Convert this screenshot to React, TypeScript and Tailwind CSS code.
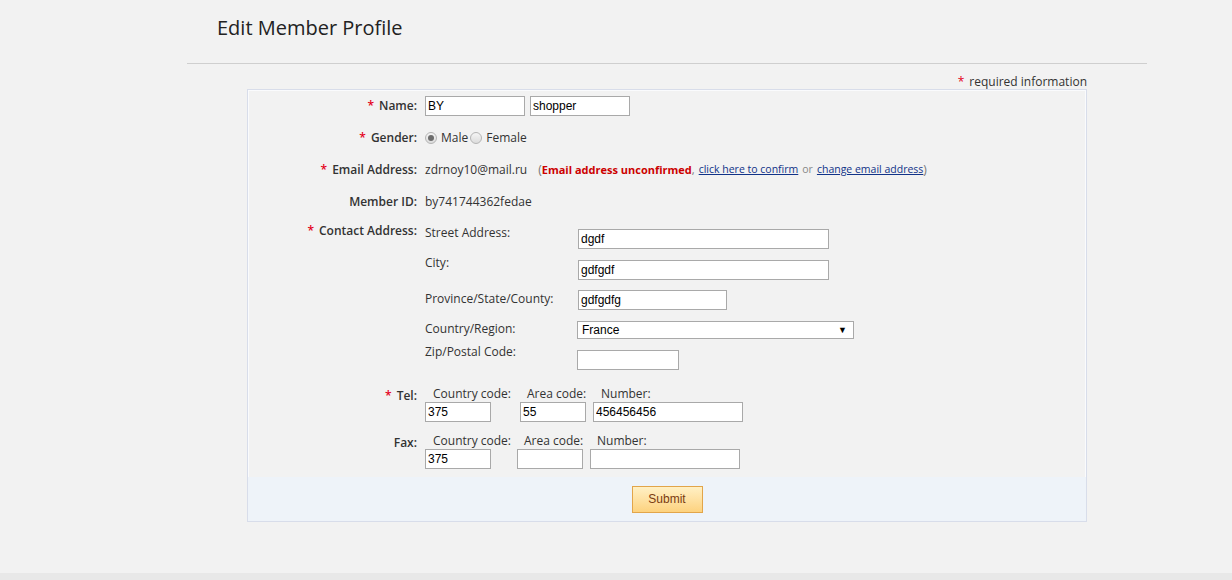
import React from 'react';

const font = { fontFamily: '"Open Sans", "Liberation Sans", sans-serif' };

function Field({ value = '', w }: { value?: string; w: string }) {
  return (
    <input
      defaultValue={value}
      className={`h-[20px] ${w} border border-[#a9a9a9] bg-white px-[2px] text-[12px] text-black outline-none font-['Liberation_Sans',Arial,sans-serif]`}
    />
  );
}

function Req() {
  return <span className="mr-[5px] text-[#e4001b]">*</span>;
}

function Label({ children, req }: { children: React.ReactNode; req?: boolean }) {
  return (
    <div className="w-[177px] shrink-0 pr-[8px] text-right font-semibold text-[#333]">
      {req && <Req />}
      {children}
    </div>
  );
}

function Radio({ checked }: { checked?: boolean }) {
  return (
    <span className="flex h-[12px] w-[12px] items-center justify-center rounded-full border border-[#b5b5b5] bg-gradient-to-b from-[#f5f5f5] to-[#dcdcdc]">
      {checked && <span className="h-[6px] w-[6px] rounded-full bg-[#6d6d6d]" />}
    </span>
  );
}

export default function App() {
  return (
    <div className="flex min-h-[580px] flex-col bg-[#f2f2f2] text-[12px] text-[#333]" style={font}>
      <div className="ml-[187px] h-[56px] w-[960px] pl-[30px] pt-[14px]">
        <h1 className="text-[20px] leading-[28px] text-[#222]">Edit Member Profile</h1>
      </div>
      <div className="ml-[187px] w-[960px]">
        <div className="mt-[7px] border-t border-[#cfcfcf]" />
        <div className="mt-[11px] pr-[60px] text-right leading-[14px]">
          <Req />
          required information
        </div>
        <div className="ml-[60px] w-[840px] border border-[#d8ddea] bg-[#f2f2f2] shadow-[inset_0_0_0_1px_#fafbfd]">
          <div className="flex h-[32px] items-center">
            <Label req>Name:</Label>
            <Field value="BY" w="w-[100px]" />
            <span className="w-[5px]" />
            <Field value="shopper" w="w-[100px]" />
          </div>
          <div className="flex h-[32px] items-center">
            <Label req>Gender:</Label>
            <Radio checked />
            <span className="ml-[4px] mr-[2px]">Male</span>
            <Radio />
            <span className="ml-[4px]">Female</span>
          </div>
          <div className="flex h-[32px] items-center">
            <Label req>Email Address:</Label>
            <span>zdrnoy10@mail.ru</span>
            <span className="ml-[11px] text-[#777]">(</span>
            <span className="text-[11px] font-bold text-[#cc0000]">Email address unconfirmed</span>
            <span className="mr-[4px] text-[11px] text-[#777]">,</span>
            <a href="#" className="text-[10.5px] text-[#113388] underline">click here to confirm</a>
            <span className="mx-[4px] text-[10.5px] text-[#888]">or</span>
            <a href="#" className="text-[10.5px] text-[#113388] underline">change email address</a>
            <span className="text-[#777]">)</span>
          </div>
          <div className="flex h-[31px] items-center">
            <Label>Member ID:</Label>
            <span>by741744362fedae</span>
          </div>
          <div className="flex pt-[6px]">
            <div className="leading-[16px]">
              <Label req>Contact Address:</Label>
            </div>
            <div className="leading-[16px]">
              <div className="flex h-[32px] items-start">
                <div className="mt-[2px] w-[153px]">Street Address:</div>
                <div className="mt-[6px]"><Field value="dgdf" w="w-[251px]" /></div>
              </div>
              <div className="flex h-[30px] items-start">
                <div className="w-[153px]">City:</div>
                <div className="mt-[5px]"><Field value="gdfgdf" w="w-[251px]" /></div>
              </div>
              <div className="flex h-[30px] items-start">
                <div className="mt-[6px] w-[153px]">Province/State/County:</div>
                <div className="mt-[5px]"><Field value="gdfgdfg" w="w-[149px]" /></div>
              </div>
              <div className="flex h-[26px] items-start">
                <div className="mt-[6px] w-[152px]">Country/Region:</div>
                <div className="mt-[6px] flex h-[18px] w-[277px] items-center justify-between border border-[#a9a9a9] bg-white pl-[4px] pr-[6px] font-['Liberation_Sans',Arial,sans-serif] text-[12px] text-black">
                  <span>France</span>
                  <span className="text-[9px]">▼</span>
                </div>
              </div>
              <div className="flex h-[37px] items-start">
                <div className="mt-[3px] w-[152px]">Zip/Postal Code:</div>
                <div className="mt-[9px]"><Field w="w-[102px]" /></div>
              </div>
            </div>
          </div>
          <div className="mt-[8px] flex leading-[16px]">
            <div className="mt-[2px]">
              <Label req>Tel:</Label>
            </div>
            <div className="w-[95px]">
              <div className="pl-[8px]">Country code:</div>
              <Field value="375" w="w-[66px]" />
            </div>
            <div className="w-[73px]">
              <div className="pl-[7px]">Area code:</div>
              <Field value="55" w="w-[66px]" />
            </div>
            <div>
              <div className="pl-[8px]">Number:</div>
              <Field value="456456456" w="w-[150px]" />
            </div>
          </div>
          <div className="mt-[11px] flex leading-[16px]">
            <div className="mt-[2px]">
              <Label>Fax:</Label>
            </div>
            <div className="w-[92px]">
              <div className="pl-[8px]">Country code:</div>
              <Field value="375" w="w-[66px]" />
            </div>
            <div className="w-[73px]">
              <div className="pl-[7px]">Area code:</div>
              <Field w="w-[66px]" />
            </div>
            <div>
              <div className="pl-[7px]">Number:</div>
              <Field w="w-[150px]" />
            </div>
          </div>
          <div className="mt-[8px] flex h-[44px] items-center justify-center bg-[#eef3f9]">
            <button className="h-[27px] w-[71px] border border-[#e2a54a] bg-gradient-to-b from-[#fff0c4] to-[#fdd27e] font-['Liberation_Sans',Arial,sans-serif] text-[12px] text-[#7a3b12]">
              Submit
            </button>
          </div>
        </div>
      </div>
      <div className="flex-1" />
      <div className="h-[7px] bg-[#e8e8e8]" />
    </div>
  );
}
